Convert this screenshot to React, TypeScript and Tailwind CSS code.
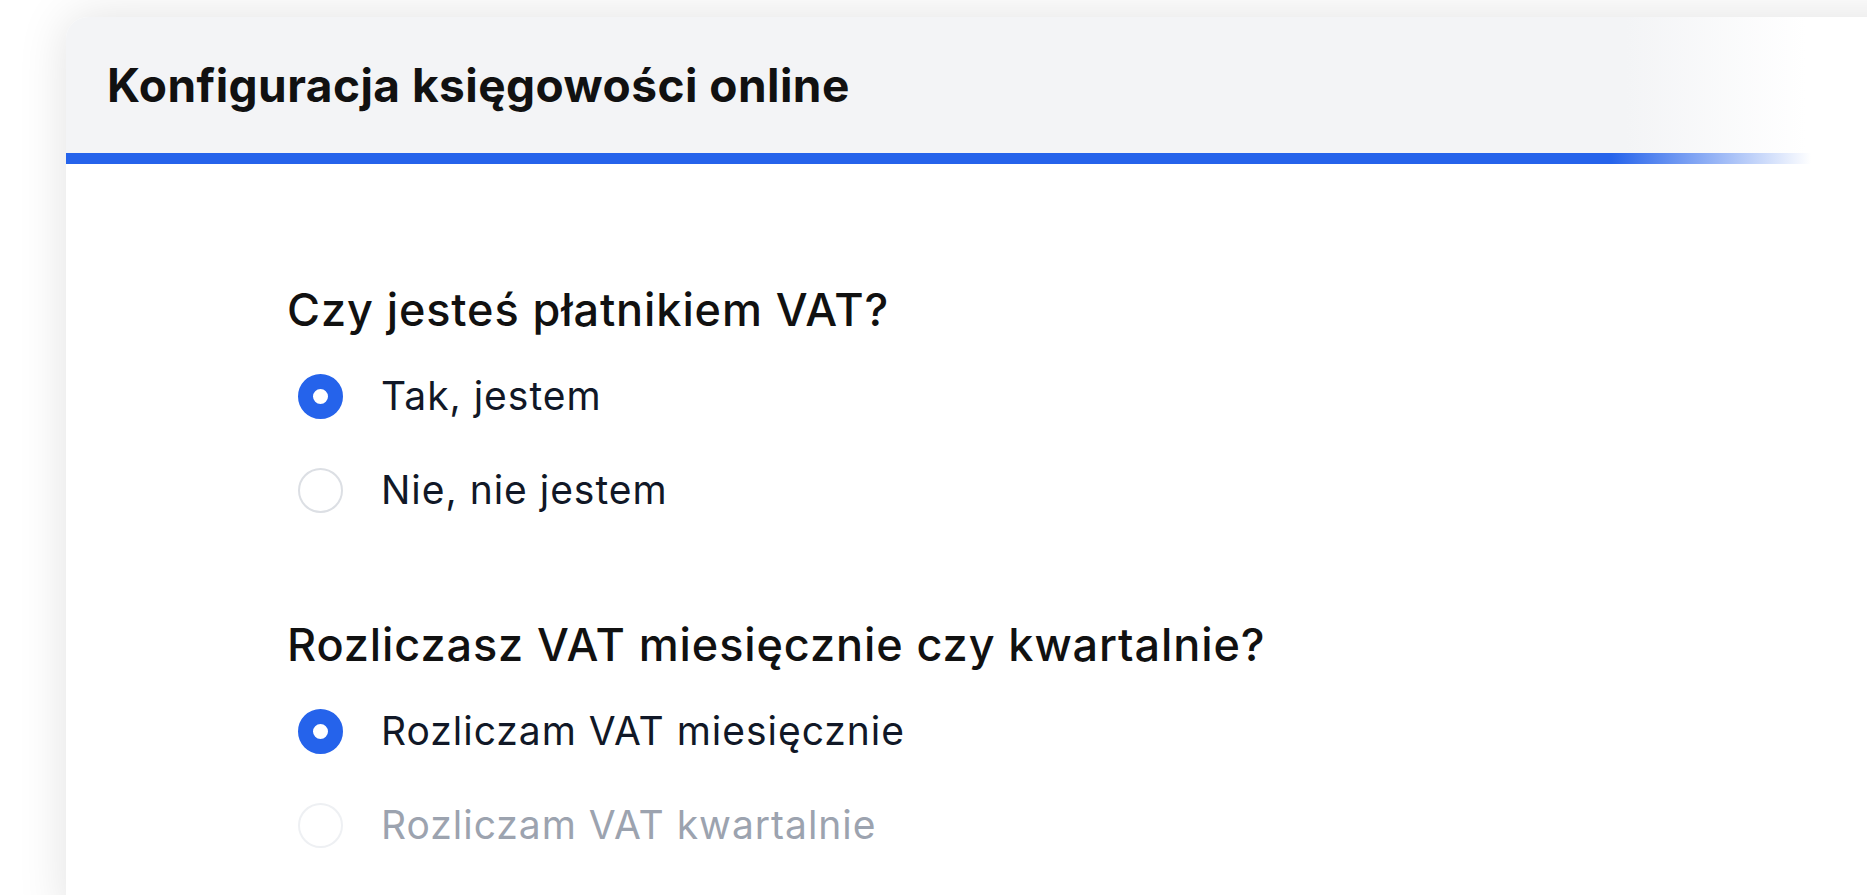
import React from "react";

type Option = {
  label: string;
  checked?: boolean;
  disabled?: boolean;
};

const questions: { title: string; options: Option[] }[] = [
  {
    title: "Czy jesteś płatnikiem VAT?",
    options: [{ label: "Tak, jestem", checked: true }, { label: "Nie, nie jestem" }],
  },
  {
    title: "Rozliczasz VAT miesięcznie czy kwartalnie?",
    options: [
      { label: "Rozliczam VAT miesięcznie", checked: true },
      { label: "Rozliczam VAT kwartalnie", disabled: true },
    ],
  },
];

function Radio({ checked, disabled }: { checked?: boolean; disabled?: boolean }) {
  if (checked) {
    return <span className="block h-[45px] w-[45px] shrink-0 rounded-full border-[15px] border-[#2563eb] bg-white" />;
  }
  return (
    <span
      className={`block h-[45px] w-[45px] shrink-0 rounded-full border-2 bg-white ${
        disabled ? "border-[#eef0f3]" : "border-[#dcdfe4]"
      }`}
    />
  );
}

export default function App() {
  return (
    <div className="h-[895px] w-full overflow-hidden bg-white font-['Inter',sans-serif]">
      <div className="ml-[66px] mt-[17px] h-[900px] w-[1900px] rounded-tl-[22px] bg-white shadow-[0_0_50px_rgba(0,0,0,0.12)]">
        {/* nagłówek */}
        <div className="flex h-[136px] items-center rounded-tl-[22px] bg-[linear-gradient(to_right,#f3f4f6_1560px,#ffffff_1740px)] pl-[41px]">
          <h1 className="text-[46px] font-bold tracking-[0.01em] text-[#111111]">
            Konfiguracja księgowości online
          </h1>
        </div>
        <div className="h-[11px] bg-[linear-gradient(to_right,#2563eb_1545px,rgba(37,99,235,0)_1745px)]" />

        {/* pytania */}
        <div className="pl-[221px] pt-[118px]">
          {questions.map((q, qi) => (
            <div key={q.title} className={qi > 0 ? "mt-[99px]" : ""}>
              <h2 className="text-[45px] leading-[56px] font-medium tracking-[0.02em] text-[#111111]">
                {q.title}
              </h2>
              <div className="mt-[30px] flex flex-col gap-[38px] pl-[11px]">
                {q.options.map((o) => (
                  <label key={o.label} className="flex h-[56px] items-center gap-[38px]">
                    <Radio checked={o.checked} disabled={o.disabled} />
                    <span
                      className={`text-[39px] tracking-[0.025em] ${
                        o.disabled ? "text-[#9ca3af]" : "text-[#111827]"
                      }`}
                    >
                      {o.label}
                    </span>
                  </label>
                ))}
              </div>
            </div>
          ))}
        </div>
      </div>
    </div>
  );
}
